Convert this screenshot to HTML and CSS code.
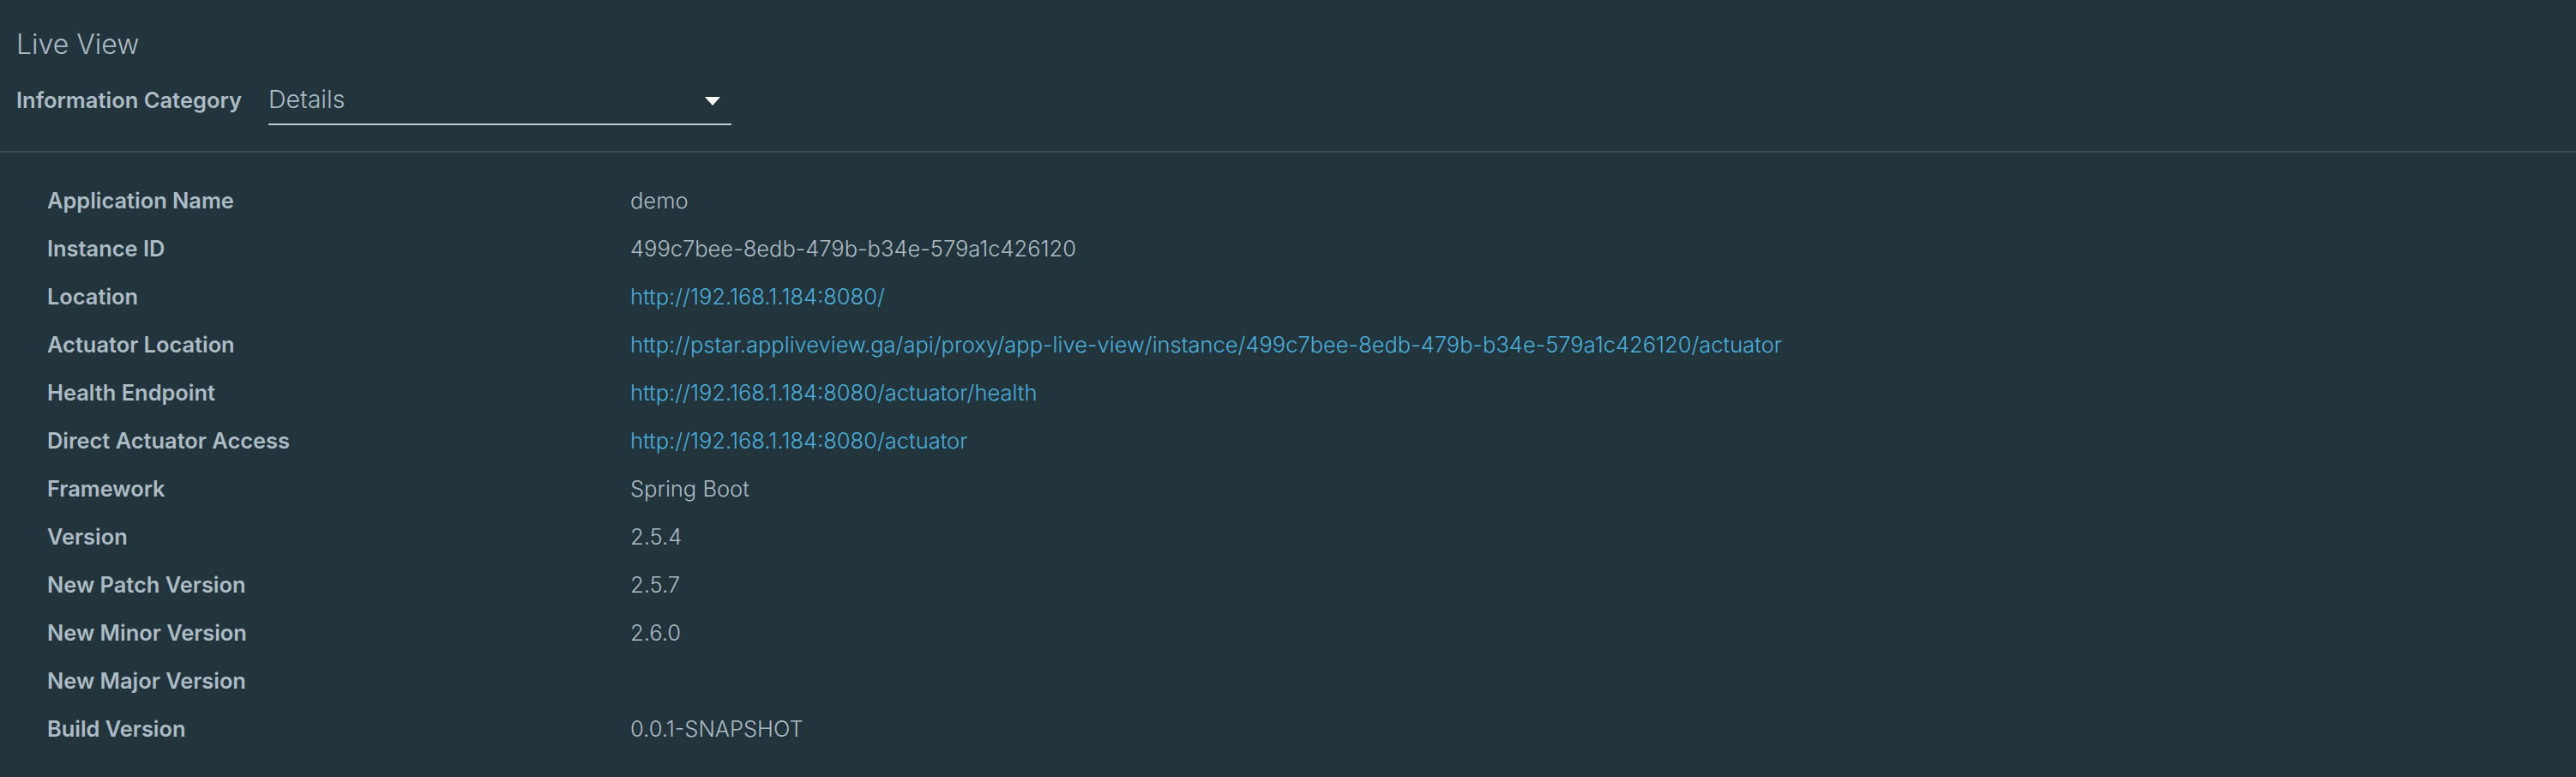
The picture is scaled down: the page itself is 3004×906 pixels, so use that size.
FILE: index.html
```html
<!DOCTYPE html>
<html lang="en">
<head>
<meta charset="utf-8">
<title>Live View</title>
<link rel="stylesheet" href="styles.css">
</head>
<body>
<header class="header">
  <h1 class="title">Live View</h1>
  <div class="filter">
    <span class="filter-label">Information Category</span>
    <div class="select">
      <span class="select-value">Details</span>
      <svg class="caret" width="18" height="10" viewBox="0 0 18 10"><polygon points="0,0 18,0 9,10" fill="#ffffff"/></svg>
    </div>
  </div>
</header>
<main class="details">
  <div class="key">Application Name</div><div class="val">demo</div>
  <div class="key">Instance ID</div><div class="val">499c7bee-8edb-479b-b34e-579a1c426120</div>
  <div class="key">Location</div><div class="val"><a href="#">http://192.168.1.184:8080/</a></div>
  <div class="key">Actuator Location</div><div class="val"><a href="#">http://pstar.appliveview.ga/api/proxy/app-live-view/instance/499c7bee-8edb-479b-b34e-579a1c426120/actuator</a></div>
  <div class="key">Health Endpoint</div><div class="val"><a href="#">http://192.168.1.184:8080/actuator/health</a></div>
  <div class="key">Direct Actuator Access</div><div class="val"><a href="#">http://192.168.1.184:8080/actuator</a></div>
  <div class="key">Framework</div><div class="val">Spring Boot</div>
  <div class="key">Version</div><div class="val">2.5.4</div>
  <div class="key">New Patch Version</div><div class="val">2.5.7</div>
  <div class="key">New Minor Version</div><div class="val">2.6.0</div>
  <div class="key">New Major Version</div><div class="val"></div>
  <div class="key">Build Version</div><div class="val">0.0.1-SNAPSHOT</div>
</main>
</body>
</html>
```
FILE: styles.css
```css
html, body {
  margin: 0;
  background: #22343c;
  color: #adbbc4;
  font-family: Inter, "Noto Sans", sans-serif;
  height: 100%;
}

.header {
  padding: 32px 19px 30px;
  border-bottom: 2px solid #394b53;
}

.title {
  margin: 0;
  font-size: 32px;
  font-weight: 300;
  line-height: 40px;
  color: #adbbc4;
}

.filter {
  display: flex;
  align-items: baseline;
  gap: 31px;
  margin-top: 26px;
}

.filter-label {
  font-size: 25.5px;
  font-weight: 600;
}

.select {
  width: 540px;
  display: flex;
  justify-content: space-between;
  align-items: center;
  border-bottom: 2px solid #c3cbcf;
  padding-bottom: 10px;
  box-sizing: border-box;
}

.select-value {
  font-size: 28.5px;
  font-weight: 300;
  line-height: 36px;
}

.caret {
  margin-right: 13px;
  margin-top: 4px;
}

.details {
  display: grid;
  grid-template-columns: 680px 1fr;
  grid-auto-rows: 56px;
  padding: 28px 0 0 55px;
  line-height: 56px;
}

.key {
  font-size: 25.4px;
  font-weight: 600;
}

.val {
  font-size: 25.5px;
  font-weight: 300;
}

.val a {
  color: #4aaed9;
  text-decoration: none;
}
```
